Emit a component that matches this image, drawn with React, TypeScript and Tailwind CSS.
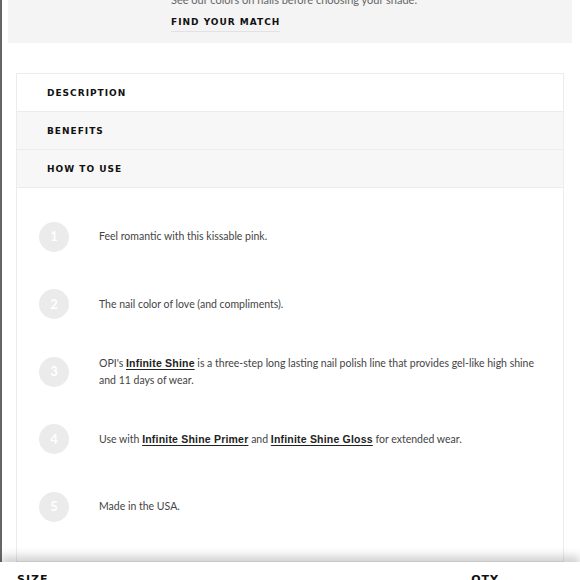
import React from 'react';

const heading = { fontFamily: '"DejaVu Sans", "Liberation Sans", sans-serif' };

const Link: React.FC<{ children: React.ReactNode }> = ({ children }) => (
  <a
    href="#"
    className="font-bold text-[#222] underline underline-offset-2 decoration-1 tracking-[0.2px]"
    style={{ fontFamily: '"Liberation Sans", Arial, sans-serif' }}
  >
    {children}
  </a>
);

const steps: React.ReactNode[] = [
  <>Feel romantic with this kissable pink.</>,
  <>The nail color of love (and compliments).</>,
  <>
    OPI's <Link>Infinite Shine</Link> is a three-step long lasting nail polish line that provides gel-like high shine
    and 11 days of wear.
  </>,
  <>
    Use with <Link>Infinite Shine Primer</Link> and <Link>Infinite Shine Gloss</Link> for extended wear.
  </>,
  <>Made in the USA.</>,
];

const tabs = [
  { label: 'DESCRIPTION', bg: 'bg-white' },
  { label: 'BENEFITS', bg: 'bg-[#f7f7f7]' },
  { label: 'HOW TO USE', bg: 'bg-[#f7f7f7]' },
];

export default function App() {
  return (
    <div
      className="relative w-[580px] h-[580px] overflow-hidden bg-white flex flex-col"
      style={{ fontFamily: '"Lato", "Liberation Sans", sans-serif' }}
    >
      <div className="h-[562px] shrink-0 border-l-2 border-[#666] pl-[6px] pr-[8px] overflow-hidden">
        {/* find your match box */}
        <div className="mt-[-14px] h-[57px] bg-[#f4f4f4] pl-[163px] pt-[7px]">
          <p className="text-[11px] leading-[14px] text-[#666]">See our colors on nails before choosing your shade.</p>
          <a
            href="#"
            className="inline-block mt-[7px] text-[9px] font-bold tracking-[1px] text-[#111] border-b border-[#e2e2e2] pb-[3px] leading-[12px]"
            style={heading}
          >
            FIND YOUR MATCH
          </a>
        </div>

        {/* accordion card */}
        <div className="mt-[30px] ml-[8px] w-[548px] border border-[#ececec]">
          {tabs.map((t) => (
            <div key={t.label} className={`h-[38px] flex items-center pl-[30px] border-b border-[#ececec] ${t.bg}`}>
              <span className="text-[9px] font-bold tracking-[1px] text-[#111] leading-[12px]" style={heading}>
                {t.label}
              </span>
            </div>
          ))}
          <div className="pt-[15px] pb-[20px] pl-[22px] pr-[16px]">
            {steps.map((s, i) => (
              <div key={i} className="h-[67.5px] flex items-center">
                <div className="w-[30px] h-[30px] shrink-0 rounded-full bg-[#ebebeb] flex items-center justify-center text-white text-[13px] font-bold">
                  {i + 1}
                </div>
                <p className="ml-[30px] text-[10.5px] leading-[17px] text-[#444]">{s}</p>
              </div>
            ))}
          </div>
        </div>
      </div>

      {/* sticky add-to-bag bar */}
      <div className="relative z-10 flex-1 bg-white shadow-[0_-6px_10px_rgba(0,0,0,0.18)] flex justify-between pl-[17px] pr-[81px] pt-[10px]">
        <span className="text-[11px] font-bold tracking-[1px] text-[#111]" style={heading}>
          SIZE
        </span>
        <span className="text-[11px] font-bold tracking-[1px] text-[#111]" style={heading}>
          QTY
        </span>
      </div>
    </div>
  );
}
